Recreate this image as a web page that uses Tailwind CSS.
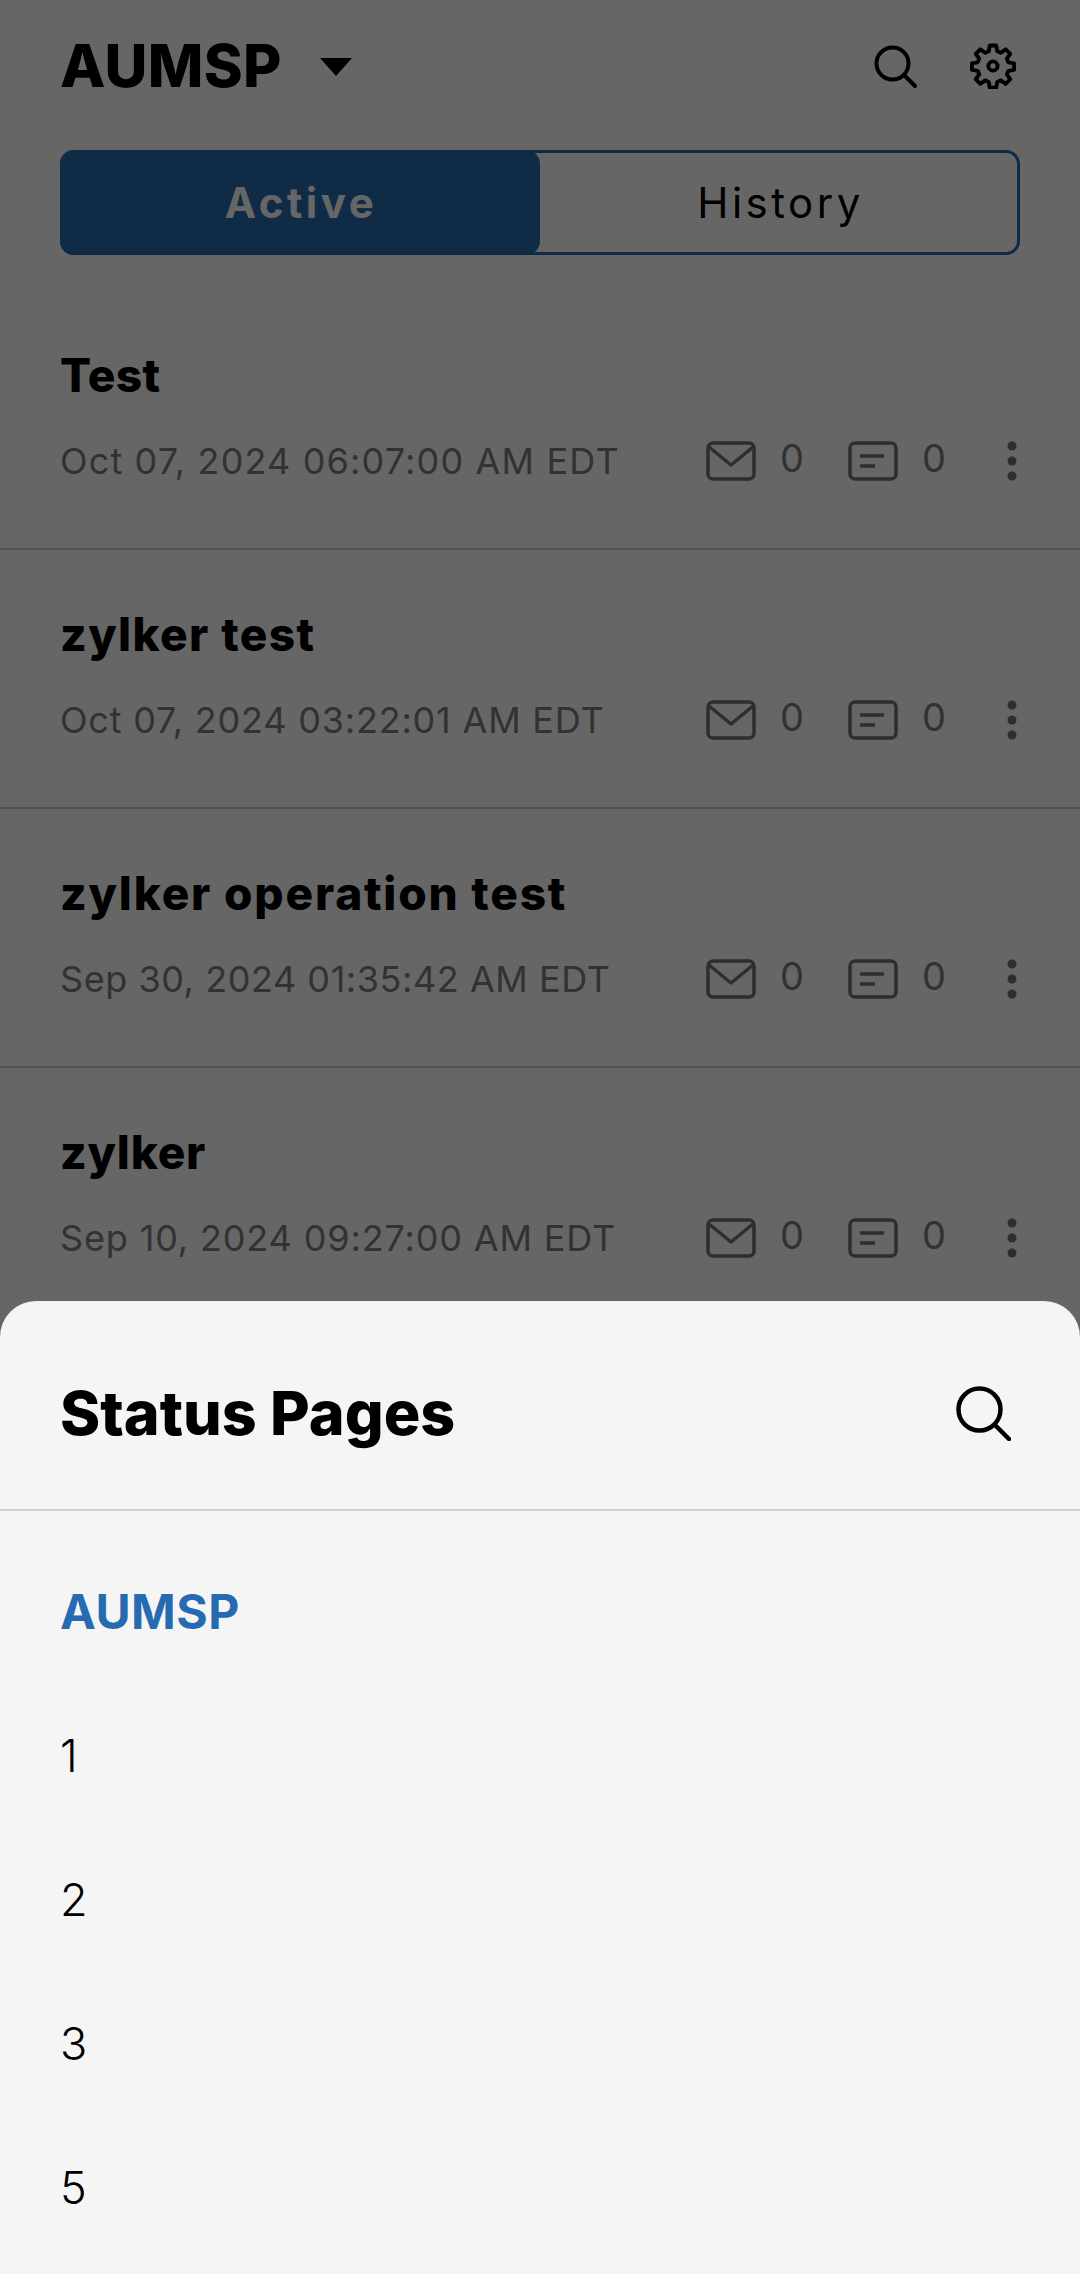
<!DOCTYPE html>
<html lang="en">
<head>
  <meta charset="UTF-8" />
  <meta name="viewport" content="width=device-width, initial-scale=1" />
  <title>Status Pages</title>
  <script src="https://cdn.jsdelivr.net/npm/@tailwindcss/browser@4"></script>
</head>
<body class="relative w-[1080px] h-[2274px] overflow-hidden bg-white font-['Inter',sans-serif] text-black">

  <!-- Header -->
  <header class="h-[150px] pl-[60px] pr-[60px] pb-[19px] flex items-center justify-between">
    <div class="flex items-center">
      <h1 class="text-[59px] leading-none font-extrabold tracking-[0.3px]">AUMSP</h1>
      <svg class="ml-[37px] mt-[2px]" width="34" height="20" viewBox="0 0 34 20"><path d="M1 1h32L17 19z" fill="#000"/></svg>
    </div>
    <div class="flex items-center gap-[53px] mr-[4px]">
      <svg width="44" height="44" viewBox="0 0 44 44" fill="none" stroke="#000" stroke-width="4" stroke-linecap="round"><circle cx="19.5" cy="19.5" r="16"/><path d="M31 31l11 11"/></svg>
      <svg width="46" height="46" viewBox="0 0 24 24" fill="none" stroke="#000" stroke-width="2" stroke-linejoin="round"><circle cx="12" cy="12" r="2.4"/><path d="M10.3 1.3h3.4l.5 3 1.9.8 2.5-1.8 2.4 2.4-1.8 2.5.8 1.9 3 .5v3.4l-3 .5-.8 1.9 1.8 2.5-2.4 2.4-2.5-1.8-1.9.8-.5 3h-3.4l-.5-3-1.9-.8-2.5 1.8-2.4-2.4 1.8-2.5-.8-1.9-3-.5v-3.4l3-.5.8-1.9-1.8-2.5 2.4-2.4 2.5 1.8 1.9-.8z"/></svg>
    </div>
  </header>

  <!-- Active / History toggle -->
  <div class="mx-[60px] h-[105px] flex rounded-[14px] border-[3px] border-[#266bb0]">
    <div class="w-[480px] -m-[3px] mr-0 rounded-[14px] bg-[#266bb0] text-white flex items-center justify-center pl-[2px] text-[42px] font-bold tracking-[3.5px]">Active</div>
    <div class="flex-1 flex items-center justify-center pl-[4px] text-[42px] tracking-[3.5px]">History</div>
  </div>

  <!-- Incident list -->
  <main class="mt-[36px]">
    <div class="h-[259px] px-[60px] border-b-2 border-[#cfcfcf] flex flex-col">
      <h2 class="mt-[59px] text-[46px] leading-[50px] font-extrabold tracking-[0.3px]">Test</h2>
      <div class="mt-[36px] flex items-center">
        <span class="w-[646px] text-[36px] leading-[50px] text-[#7d7d7d] tracking-[1.15px] whitespace-nowrap">Oct 07, 2024 06:07:00 AM EDT</span>
        <svg width="50" height="40" viewBox="0 0 50 40" fill="none" stroke="#737373" stroke-width="3.5" stroke-linejoin="round"><rect x="2" y="2" width="46" height="36" rx="5"/><path d="M3 6l22 18L47 6"/></svg>
        <span class="ml-[24px] w-[68px] -mt-[6px] text-[38px] leading-[50px] text-[#7d7d7d]">0</span>
        <svg width="50" height="40" viewBox="0 0 50 40" fill="none" stroke="#737373" stroke-width="3.5"><rect x="2" y="2" width="46" height="36" rx="5"/><path d="M12 15h24M12 25h15"/></svg>
        <span class="ml-[24px] w-[85px] -mt-[6px] text-[38px] leading-[50px] text-[#7d7d7d]">0</span>
        <svg width="10" height="40" viewBox="0 0 10 40" fill="#737373"><circle cx="5" cy="5" r="4.5"/><circle cx="5" cy="20" r="4.5"/><circle cx="5" cy="35" r="4.5"/></svg>
      </div>
    </div>

    <div class="h-[259px] px-[60px] border-b-2 border-[#cfcfcf] flex flex-col">
      <h2 class="mt-[59px] text-[46px] leading-[50px] font-extrabold tracking-[1.4px]">zylker test</h2>
      <div class="mt-[36px] flex items-center">
        <span class="w-[646px] text-[36px] leading-[50px] text-[#7d7d7d] tracking-[0.8px] whitespace-nowrap">Oct 07, 2024 03:22:01 AM EDT</span>
        <svg width="50" height="40" viewBox="0 0 50 40" fill="none" stroke="#737373" stroke-width="3.5" stroke-linejoin="round"><rect x="2" y="2" width="46" height="36" rx="5"/><path d="M3 6l22 18L47 6"/></svg>
        <span class="ml-[24px] w-[68px] -mt-[6px] text-[38px] leading-[50px] text-[#7d7d7d]">0</span>
        <svg width="50" height="40" viewBox="0 0 50 40" fill="none" stroke="#737373" stroke-width="3.5"><rect x="2" y="2" width="46" height="36" rx="5"/><path d="M12 15h24M12 25h15"/></svg>
        <span class="ml-[24px] w-[85px] -mt-[6px] text-[38px] leading-[50px] text-[#7d7d7d]">0</span>
        <svg width="10" height="40" viewBox="0 0 10 40" fill="#737373"><circle cx="5" cy="5" r="4.5"/><circle cx="5" cy="20" r="4.5"/><circle cx="5" cy="35" r="4.5"/></svg>
      </div>
    </div>

    <div class="h-[259px] px-[60px] border-b-2 border-[#cfcfcf] flex flex-col">
      <h2 class="mt-[59px] text-[46px] leading-[50px] font-extrabold tracking-[1.8px]">zylker operation test</h2>
      <div class="mt-[36px] flex items-center">
        <span class="w-[646px] text-[36px] leading-[50px] text-[#7d7d7d] tracking-[0.55px] whitespace-nowrap">Sep 30, 2024 01:35:42 AM EDT</span>
        <svg width="50" height="40" viewBox="0 0 50 40" fill="none" stroke="#737373" stroke-width="3.5" stroke-linejoin="round"><rect x="2" y="2" width="46" height="36" rx="5"/><path d="M3 6l22 18L47 6"/></svg>
        <span class="ml-[24px] w-[68px] -mt-[6px] text-[38px] leading-[50px] text-[#7d7d7d]">0</span>
        <svg width="50" height="40" viewBox="0 0 50 40" fill="none" stroke="#737373" stroke-width="3.5"><rect x="2" y="2" width="46" height="36" rx="5"/><path d="M12 15h24M12 25h15"/></svg>
        <span class="ml-[24px] w-[85px] -mt-[6px] text-[38px] leading-[50px] text-[#7d7d7d]">0</span>
        <svg width="10" height="40" viewBox="0 0 10 40" fill="#737373"><circle cx="5" cy="5" r="4.5"/><circle cx="5" cy="20" r="4.5"/><circle cx="5" cy="35" r="4.5"/></svg>
      </div>
    </div>

    <div class="h-[259px] px-[60px] flex flex-col">
      <h2 class="mt-[59px] text-[46px] leading-[50px] font-extrabold tracking-[0.8px]">zylker</h2>
      <div class="mt-[36px] flex items-center">
        <span class="w-[646px] text-[36px] leading-[50px] text-[#7d7d7d] tracking-[0.85px] whitespace-nowrap">Sep 10, 2024 09:27:00 AM EDT</span>
        <svg width="50" height="40" viewBox="0 0 50 40" fill="none" stroke="#737373" stroke-width="3.5" stroke-linejoin="round"><rect x="2" y="2" width="46" height="36" rx="5"/><path d="M3 6l22 18L47 6"/></svg>
        <span class="ml-[24px] w-[68px] -mt-[6px] text-[38px] leading-[50px] text-[#7d7d7d]">0</span>
        <svg width="50" height="40" viewBox="0 0 50 40" fill="none" stroke="#737373" stroke-width="3.5"><rect x="2" y="2" width="46" height="36" rx="5"/><path d="M12 15h24M12 25h15"/></svg>
        <span class="ml-[24px] w-[85px] -mt-[6px] text-[38px] leading-[50px] text-[#7d7d7d]">0</span>
        <svg width="10" height="40" viewBox="0 0 10 40" fill="#737373"><circle cx="5" cy="5" r="4.5"/><circle cx="5" cy="20" r="4.5"/><circle cx="5" cy="35" r="4.5"/></svg>
      </div>
    </div>
  </main>

  <!-- Dim layer -->
  <div class="absolute inset-0 bg-black/60"></div>

  <!-- Bottom sheet -->
  <section class="absolute left-0 right-0 bottom-0 h-[973px] rounded-t-[36px] bg-[#f5f5f5]">
    <div class="h-[210px] pt-[16px] px-[60px] flex items-center justify-between border-b-2 border-[#d2d2d2]">
      <h2 class="text-[61px] leading-none font-extrabold">Status Pages</h2>
      <svg class="mr-[9px] -mt-[1px]" width="56" height="56" viewBox="0 0 56 56" fill="none" stroke="#000" stroke-width="4.5" stroke-linecap="round"><circle cx="24.5" cy="24.5" r="21"/><path d="M40 40l14 14"/></svg>
    </div>
    <ul class="mt-[29px] px-[60px] text-[45px]">
      <li class="h-[144px] flex items-center text-[48px] font-bold tracking-[0.5px] text-[#266bb0]">AUMSP</li>
      <li class="h-[144px] flex items-center font-light">1</li>
      <li class="h-[144px] flex items-center font-light">2</li>
      <li class="h-[144px] flex items-center font-light">3</li>
      <li class="h-[144px] flex items-center font-light">5</li>
    </ul>
  </section>

</body>
</html>
